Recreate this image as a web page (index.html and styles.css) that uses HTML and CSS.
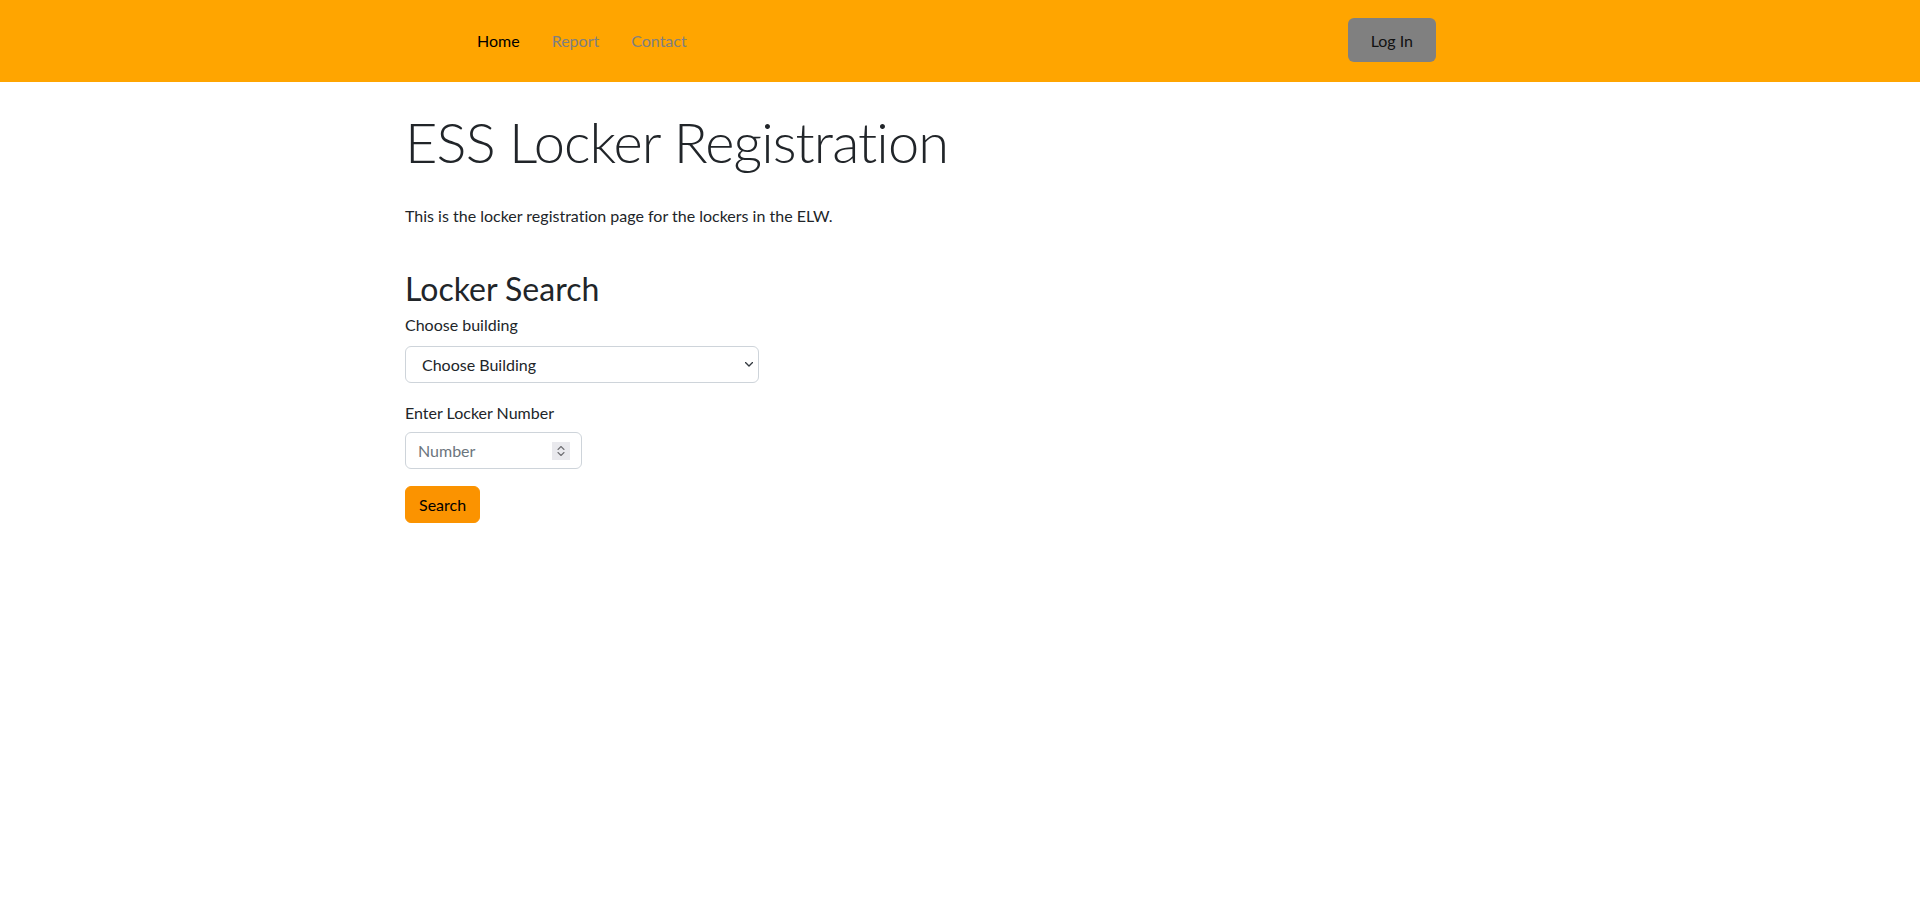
FILE: index.html
```html
<!DOCTYPE html>
<html lang="en">
<head>
<meta charset="utf-8">
<title>ESS Locker Registration</title>
<link rel="stylesheet" href="styles.css">
</head>
<body>
<header class="navbar">
  <div class="nav-inner">
    <ul class="nav-links">
      <li><a class="nav-link active" href="#">Home</a></li>
      <li><a class="nav-link" href="#">Report</a></li>
      <li><a class="nav-link" href="#">Contact</a></li>
    </ul>
    <button class="btn-login" type="button">Log In</button>
  </div>
</header>
<main class="container">
  <h1 class="title">ESS Locker Registration</h1>
  <p class="intro">This is the locker registration page for the lockers in the ELW.</p>
  <h2 class="section-title">Locker Search</h2>
  <form class="search-form">
    <label class="form-label" for="building">Choose building</label>
    <div class="select-wrap">
      <select id="building" class="form-select">
        <option>Choose Building</option>
      </select>
      <svg class="select-caret" width="8" height="5" viewBox="0 0 8 5"><path d="M0.5 0.5 L4 4 L7.5 0.5" fill="none" stroke="#343a40" stroke-width="1.4" stroke-linecap="round" stroke-linejoin="round"/></svg>
    </div>
    <label class="form-label label-number" for="number">Enter Locker Number</label>
    <div class="number-wrap">
      <input id="number" class="form-control" type="text" placeholder="Number">
      <span class="spinner"><svg width="18" height="18" viewBox="0 0 18 18"><path d="M6 7.5 L9 4.5 L12 7.5 M6 10.5 L9 13.5 L12 10.5" fill="none" stroke="#6f6f73" stroke-width="1.1" stroke-linecap="round" stroke-linejoin="round"/></svg></span>
    </div>
    <button class="btn-search" type="button">Search</button>
  </form>
</main>
</body>
</html>
```
FILE: styles.css
```css
* { box-sizing: border-box; }

body {
  margin: 0;
  font-family: "Lato", "Noto Sans", sans-serif;
  font-size: 16px;
  line-height: 24px;
  color: #212529;
  background: #fff;
  font-variant-ligatures: no-common-ligatures;
}

.navbar {
  background: #ffa500;
  height: 82px;
}

.nav-inner {
  width: 1140px;
  height: 100%;
  margin: 0 auto;
  padding: 0 94px 0 71px;
  display: flex;
  align-items: center;
  justify-content: space-between;
}

.nav-links {
  list-style: none;
  margin: 0;
  padding: 0;
  display: flex;
}

.nav-link {
  display: block;
  padding: 0 16px;
  line-height: 24px;
  color: #808080;
  text-decoration: none;
}

.nav-link.active {
  color: #000;
}

.btn-login {
  align-self: flex-start;
  margin-top: 18px;
  height: 44px;
  padding: 0 23px;
  background: #808080;
  border: none;
  border-radius: 6px;
  font-family: inherit;
  font-size: 16px;
  color: #111;
}

.container {
  width: 1110px;
  margin: 0 auto;
}

.title {
  margin: 26px 0 0;
  font-size: 56px;
  font-weight: 300;
  line-height: 67px;
  letter-spacing: -0.9px;
}

.intro {
  margin: 29px 0 0;
}

.section-title {
  margin: 42px 0 0;
  font-size: 32px;
  font-weight: 400;
  line-height: 38px;
}

.search-form {
  display: flex;
  flex-direction: column;
  align-items: flex-start;
}

.form-label {
  display: block;
  margin-top: 5px;
}

.label-number {
  margin-top: 18px;
}

.select-wrap {
  position: relative;
  width: 354px;
  height: 37px;
  margin-top: 9px;
}

.form-select {
  -webkit-appearance: none;
  appearance: none;
  width: 100%;
  height: 37px;
  padding: 0 36px 0 16px;
  border: 1px solid #ced4da;
  border-radius: 6px;
  background: #fff;
  font-family: inherit;
  font-size: 16px;
  color: #212529;
}

.select-caret {
  position: absolute;
  left: 340px;
  top: 16px;
  pointer-events: none;
}

.number-wrap {
  position: relative;
  width: 177px;
  height: 37px;
  margin-top: 7px;
}

.form-control {
  width: 100%;
  height: 37px;
  padding: 0 12px;
  border: 1px solid #ced4da;
  border-radius: 6px;
  font-family: inherit;
  font-size: 16px;
  color: #212529;
}

.form-control::placeholder {
  color: #6c757d;
}

.spinner {
  position: absolute;
  left: 147px;
  top: 10px;
  width: 18px;
  height: 18px;
  background: #e9e9ed;
  display: flex;
}

.btn-search {
  margin-top: 17px;
  height: 37px;
  padding: 0 13px;
  background: #fb9300;
  border: 1px solid #fb9300;
  border-radius: 6px;
  font-family: inherit;
  font-size: 16px;
  color: #000;
}
```
